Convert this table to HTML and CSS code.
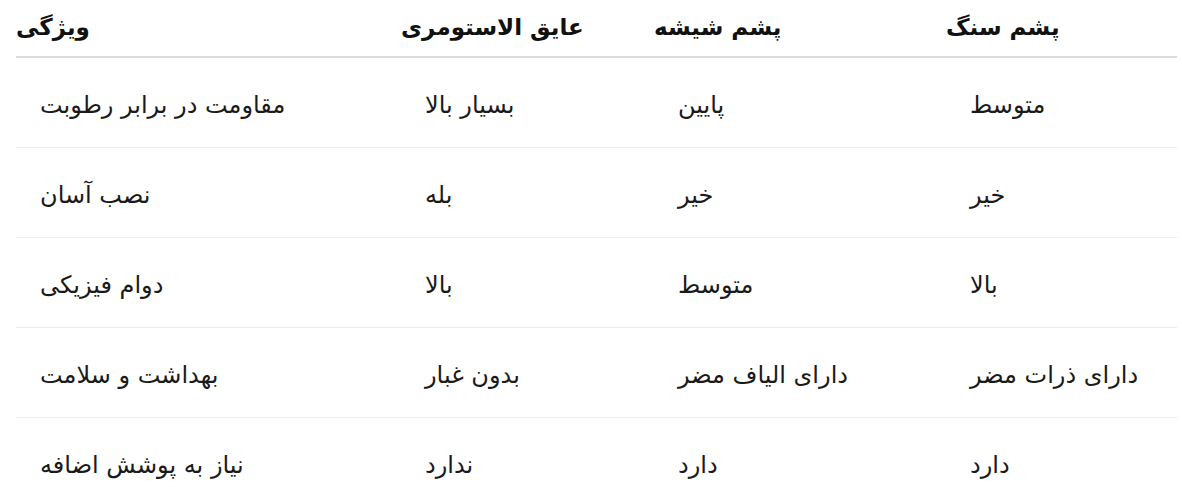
FILE: index.html
```html
<!DOCTYPE html>
<html lang="fa">
<head>
<meta charset="utf-8">
<title>مقایسه عایق‌ها</title>
<link rel="stylesheet" href="styles.css">
</head>
<body>
<table class="compare">
  <colgroup>
    <col class="c1">
    <col class="c2">
    <col class="c3">
    <col class="c4">
  </colgroup>
  <thead>
    <tr>
      <th><span dir="rtl">ویژگی</span></th>
      <th><span dir="rtl">عایق الاستومری</span></th>
      <th><span dir="rtl">پشم شیشه</span></th>
      <th><span dir="rtl">پشم سنگ</span></th>
    </tr>
  </thead>
  <tbody>
    <tr>
      <td><span dir="rtl">مقاومت در برابر رطوبت</span></td>
      <td><span dir="rtl">بسیار بالا</span></td>
      <td><span dir="rtl">پایین</span></td>
      <td><span dir="rtl">متوسط</span></td>
    </tr>
    <tr>
      <td><span dir="rtl">نصب آسان</span></td>
      <td><span dir="rtl">بله</span></td>
      <td><span dir="rtl">خیر</span></td>
      <td><span dir="rtl">خیر</span></td>
    </tr>
    <tr>
      <td><span dir="rtl">دوام فیزیکی</span></td>
      <td><span dir="rtl">بالا</span></td>
      <td><span dir="rtl">متوسط</span></td>
      <td><span dir="rtl">بالا</span></td>
    </tr>
    <tr>
      <td><span dir="rtl">بهداشت و سلامت</span></td>
      <td><span dir="rtl">بدون غبار</span></td>
      <td><span dir="rtl">دارای الیاف مضر</span></td>
      <td><span dir="rtl">دارای ذرات مضر</span></td>
    </tr>
    <tr>
      <td><span dir="rtl">نیاز به پوشش اضافه</span></td>
      <td><span dir="rtl">ندارد</span></td>
      <td><span dir="rtl">دارد</span></td>
      <td><span dir="rtl">دارد</span></td>
    </tr>
  </tbody>
</table>
</body>
</html>
```
FILE: styles.css
```css
html, body {
  margin: 0;
  padding: 0;
  background: #ffffff;
}

body {
  font-family: "DejaVu Sans", "Noto Sans", sans-serif;
  color: #1a1a1a;
}

.compare {
  margin-left: 16px;
  width: 1161px;
  border-collapse: collapse;
  table-layout: fixed;
}

.c1 { width: 385px; }
.c2 { width: 253px; }
.c3 { width: 292px; }
.c4 { width: 231px; }

.compare th {
  text-align: left;
  font-size: 23px;
  font-weight: bold;
  line-height: 30px;
  padding: 12px 0 14px 0;
  border-bottom: 2px solid #dcdcdc;
  color: #111;
}

.compare td {
  text-align: left;
  font-size: 24px;
  font-weight: normal;
  line-height: 28px;
  height: 28px;
  padding: 33px 0 28px 24px;
  border-bottom: 1px solid #ececec;
}
```
